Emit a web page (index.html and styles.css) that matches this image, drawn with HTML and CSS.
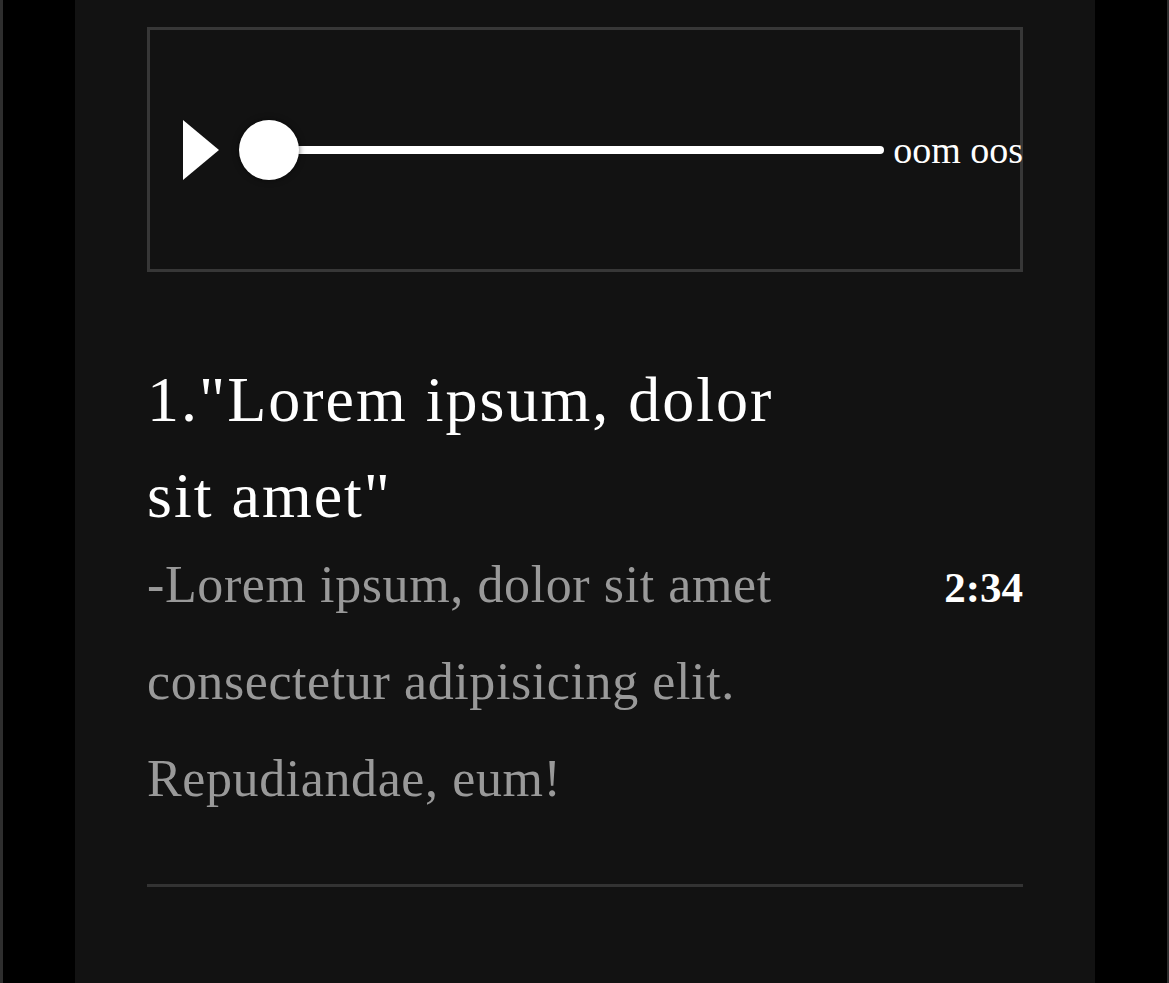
FILE: index.html
```html
<!DOCTYPE html>
<html lang="en">
<head>
<meta charset="utf-8">
<title>Track</title>
<link rel="stylesheet" href="styles.css">
</head>
<body>
<div class="frame">
  <main class="panel">
    <div class="player">
      <svg class="play" width="36" height="60" viewBox="0 0 36 60" aria-hidden="true"><polygon points="0,0 36,30 0,60" fill="#fff"/></svg>
      <div class="slider">
        <span class="thumb"></span>
        <span class="track"></span>
      </div>
      <span class="clock">oom oos</span>
    </div>
    <h1 class="title">1."Lorem ipsum, dolor sit amet"</h1>
    <div class="meta">
      <p class="desc">-Lorem ipsum, dolor sit amet consectetur adipisicing elit. Repudiandae, eum!</p>
      <span class="time">2:34</span>
    </div>
    <hr class="divider">
  </main>
</div>
</body>
</html>
```
FILE: styles.css
```css
html, body {
  margin: 0;
  padding: 0;
  background: #000;
}
.frame {
  min-height: 100vh;
  box-sizing: border-box;
  border-left: 3px solid #2e2e2e;
  border-right: 2px solid #2e2e2e;
  display: flex;
  justify-content: center;
}
.panel {
  width: 1020px;
  box-sizing: border-box;
  background: #121212;
  padding: 27px 72px 0;
  font-family: "Liberation Serif", "Times New Roman", serif;
  color: #fff;
}
.player {
  height: 245px;
  box-sizing: border-box;
  border: 3px solid #373737;
  display: flex;
  align-items: center;
  padding-left: 33px;
}
.play {
  flex: none;
  display: block;
  margin-right: 20px;
}
.slider {
  flex: 1;
  display: flex;
  align-items: center;
  height: 60px;
}
.thumb {
  flex: none;
  width: 60px;
  height: 60px;
  border-radius: 50%;
  background: #fff;
  position: relative;
  z-index: 1;
  box-shadow: 0 0 6px rgba(0, 0, 0, 0.55);
}
.track {
  flex: 1;
  height: 8px;
  border-radius: 4px;
  background: #fff;
  margin-left: -30px;
}
.clock {
  flex: none;
  margin-left: 9px;
  margin-right: -3px;
  font-size: 38px;
  line-height: 1;
  white-space: nowrap;
}
.title {
  margin: 80px 0 0;
  max-width: 680px;
  font-weight: normal;
  font-size: 64px;
  line-height: 96px;
  letter-spacing: 2px;
}
.meta {
  margin-top: -8px;
  display: flex;
  align-items: baseline;
  justify-content: space-between;
}
.desc {
  margin: 0;
  flex: 1;
  font-size: 52px;
  line-height: 97px;
  letter-spacing: 0.6px;
  color: #999;
}
.time {
  flex: none;
  font-size: 43px;
  font-weight: bold;
  margin-left: 20px;
}
.divider {
  margin: 57px 0 0;
  border: 0;
  height: 3px;
  background: #333;
}
```
